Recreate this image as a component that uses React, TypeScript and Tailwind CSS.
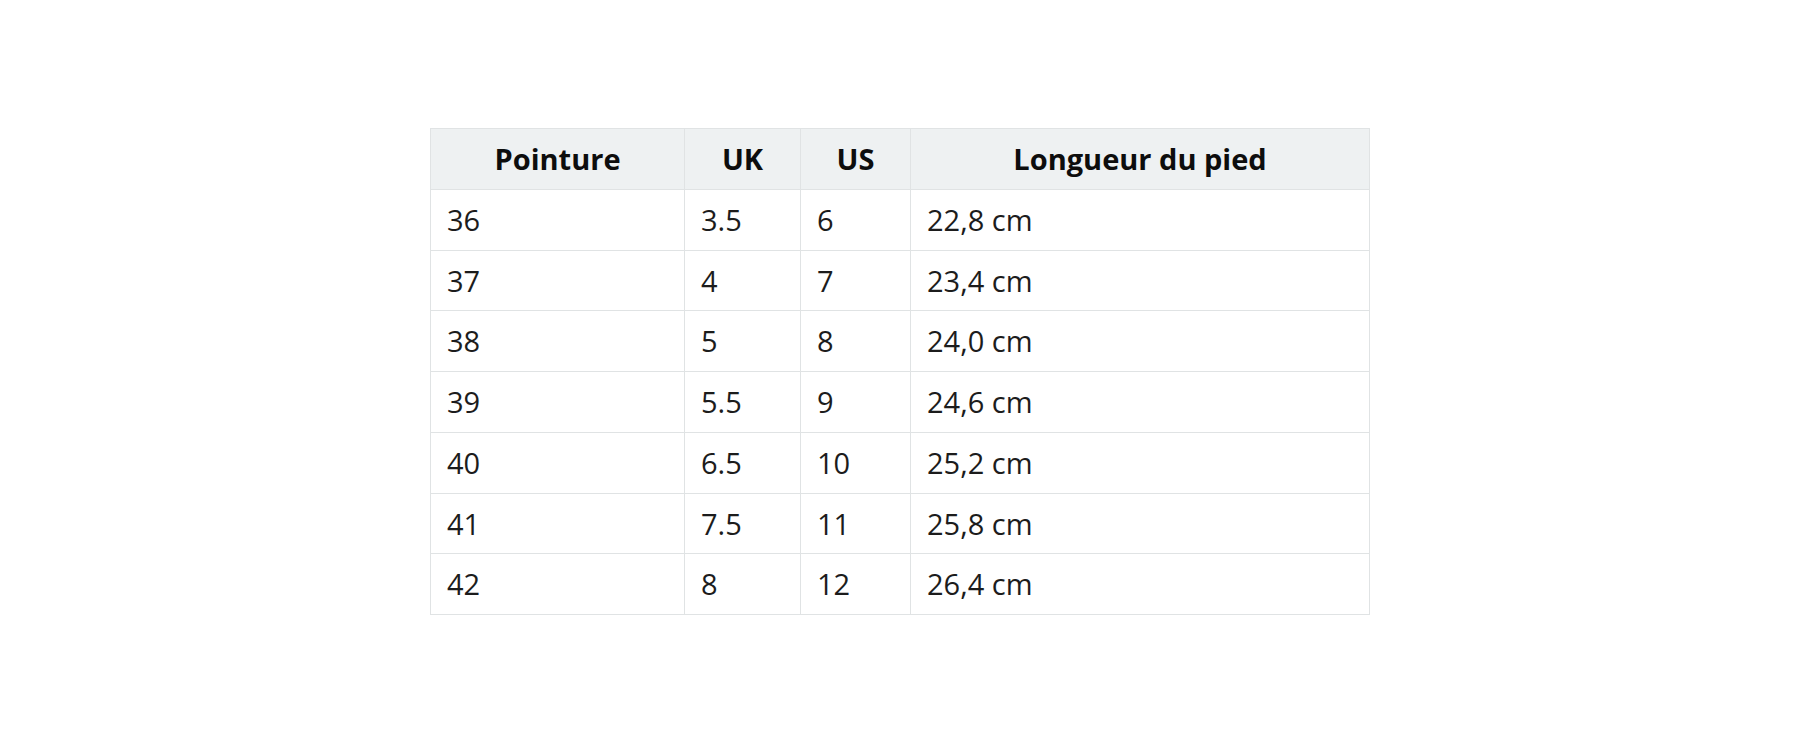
const rows = [
  ["36", "3.5", "6", "22,8 cm"],
  ["37", "4", "7", "23,4 cm"],
  ["38", "5", "8", "24,0 cm"],
  ["39", "5.5", "9", "24,6 cm"],
  ["40", "6.5", "10", "25,2 cm"],
  ["41", "7.5", "11", "25,8 cm"],
  ["42", "8", "12", "26,4 cm"],
];

const App = () => {
  return (
    <div className="w-full min-h-screen bg-white pt-[128px]" style={{ fontFamily: '"Open Sans", sans-serif' }}>
      <table className="mx-auto table-fixed border-collapse text-[29px] leading-[43.75px] text-[#1c1c1c]">
        <colgroup>
          <col className="w-[254px]" />
          <col className="w-[116px]" />
          <col className="w-[110px]" />
          <col className="w-[459px]" />
        </colgroup>
        <thead>
          <tr className="bg-[#eef1f2]">
            {["Pointure", "UK", "US", "Longueur du pied"].map((h) => (
              <th key={h} className="border border-[#e0e3e4] px-4 py-2 text-center font-bold text-[#0d0d0d]">
                {h}
              </th>
            ))}
          </tr>
        </thead>
        <tbody>
          {rows.map((row) => (
            <tr key={row[0]}>
              {row.map((cell, i) => (
                <td key={i} className="border border-[#e0e3e4] px-4 py-2 text-left">
                  {cell}
                </td>
              ))}
            </tr>
          ))}
        </tbody>
      </table>
    </div>
  );
};

export default App;
